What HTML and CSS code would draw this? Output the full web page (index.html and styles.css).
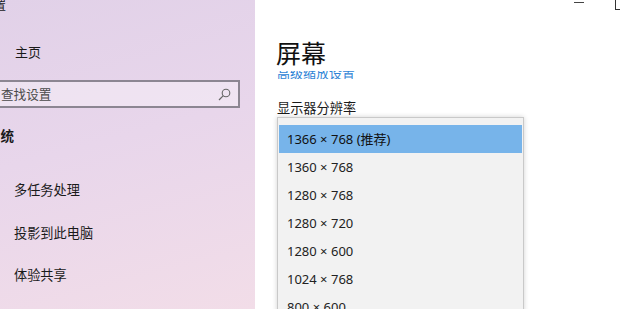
FILE: index.html
```html
<!DOCTYPE html>
<html lang="zh-CN">
<head>
<meta charset="utf-8">
<title>设置 - 屏幕</title>
<link rel="stylesheet" href="styles.css">
</head>
<body>
<div class="app">
  <aside class="side">
    <div class="side-inner">
      <div class="title">设置</div>
      <div class="home">
        <svg class="home-icon" width="16" height="16" viewBox="0 0 16 16"><path d="M1.5 8 L8 2 L14.5 8 M3.5 6.5 V14 H12.5 V6.5" fill="none" stroke="#333" stroke-width="1"/></svg>
        <span class="home-text">主页</span>
      </div>
      <div class="search">
        <span class="search-text">查找设置</span>
        <svg class="search-icon" width="13" height="13" viewBox="0 0 13 13"><circle cx="8" cy="5" r="3.8" fill="none" stroke="#666" stroke-width="1.1"/><path d="M5.3 7.7 L1 12" stroke="#666" stroke-width="1.2"/></svg>
      </div>
      <div class="group">系统</div>
      <div class="item">多任务处理</div>
      <div class="item">投影到此电脑</div>
      <div class="item">体验共享</div>
    </div>
  </aside>
  <main class="main">
    <h1 class="heading">屏幕</h1>
    <div class="link-clip"><span class="link">高级缩放设置</span></div>
    <div class="label">显示器分辨率</div>
    <ul class="dropdown">
      <li class="opt selected">1366 × 768 (推荐)</li>
      <li class="opt">1360 × 768</li>
      <li class="opt">1280 × 768</li>
      <li class="opt">1280 × 720</li>
      <li class="opt">1280 × 600</li>
      <li class="opt">1024 × 768</li>
      <li class="opt">800 × 600</li>
    </ul>
  </main>
  <div class="winctl">
    <span class="min"></span>
    <span class="max"></span>
  </div>
</div>
</body>
</html>
```

FILE: styles.css
```css
* { box-sizing: border-box; }
html, body { margin: 0; padding: 0; }
body {
  width: 620px;
  height: 309px;
  overflow: hidden;
  font-family: "Noto Sans", "Noto Sans CJK SC", sans-serif;
  color: #1a1a1a;
  background: #fff;
}
.app {
  position: relative;
  display: flex;
  height: 309px;
  overflow: hidden;
}
.side {
  width: 255px;
  flex: none;
  overflow: hidden;
  background: linear-gradient(165deg, #e1d1e8 0%, #e8d6eb 45%, #f2dde8 100%);
}
.side-inner {
  margin-left: -20px;
  display: flex;
  flex-direction: column;
  font-family: "Noto Sans CJK SC", sans-serif;
  font-size: 13px;
}
.side-inner > * { flex: none; }
.title {
  height: 16px;
  line-height: 16px;
  margin-top: -3px;
  padding-left: 2px;
  font-size: 12px;
}
.home {
  margin-top: 28px;
  height: 22px;
  display: flex;
  align-items: center;
}
.home-icon { margin-left: 5px; flex: none; }
.home-text { margin-left: 14px; line-height: 22px; }
.search {
  margin-top: 17px;
  width: 260px;
  height: 28px;
  border: 2px solid #8c8692;
  background: rgba(255, 255, 255, 0.35);
  display: flex;
  align-items: center;
  justify-content: space-between;
  padding: 0 7px 0 19px;
  color: #4a4a4a;
}
.search-text { line-height: 20px; font-size: 12.6px; }
.search-icon { flex: none; }
.group {
  margin-top: 17px;
  margin-bottom: 24px;
  height: 20px;
  line-height: 20px;
  padding-left: 7px;
  font-weight: 700;
  font-size: 13.5px;
}
.item {
  height: 42.5px;
  line-height: 42.5px;
  padding-left: 34px;
  font-size: 13.2px;
}
.main {
  flex: 1;
  padding-left: 21px;
  display: flex;
  flex-direction: column;
  align-items: flex-start;
}
.main > * { flex: none; }
.heading {
  margin: 37px 0 0;
  font-family: "Noto Sans CJK SC", sans-serif;
  font-weight: 400;
  font-size: 25px;
  line-height: 30px;
  color: #111;
}
.link-clip {
  margin-top: 4px;
  margin-left: 1px;
  height: 8px;
  overflow: hidden;
  display: flex;
  align-items: flex-end;
}
.link {
  font-family: "Noto Sans CJK SC", sans-serif;
  font-size: 13px;
  line-height: 12px;
  color: #2f84d6;
}
.label {
  margin-top: 19px;
  margin-left: 1px;
  height: 19px;
  line-height: 20px;
  font-family: "Noto Sans CJK SC", sans-serif;
  font-size: 13.2px;
  color: #1a1a1a;
}
.dropdown {
  list-style: none;
  margin: 0 0 0 1px;
  width: 247px;
  padding: 7px 1px 0;
  border: 1px solid #c9c9c9;
  border-bottom: none;
  background: #f2f2f2;
  box-shadow: 0 0 5px rgba(0, 0, 0, 0.18);
}
.opt {
  height: 28px;
  line-height: 28px;
  padding-left: 8px;
  font-family: "Noto Sans", "Noto Sans CJK SC", sans-serif;
  font-size: 13px;
  color: #222;
  white-space: nowrap;
}
.opt.selected { background: #77b4ea; color: #111; }
.winctl {
  position: absolute;
  top: 0;
  right: 0;
  width: 50px;
  height: 12px;
}
.min {
  position: absolute;
  left: 4px;
  top: 2px;
  width: 10px;
  height: 1px;
  background: #444;
}
.max {
  position: absolute;
  left: 45px;
  top: -2px;
  width: 10px;
  height: 12px;
  border: 1px solid #333;
}
```
